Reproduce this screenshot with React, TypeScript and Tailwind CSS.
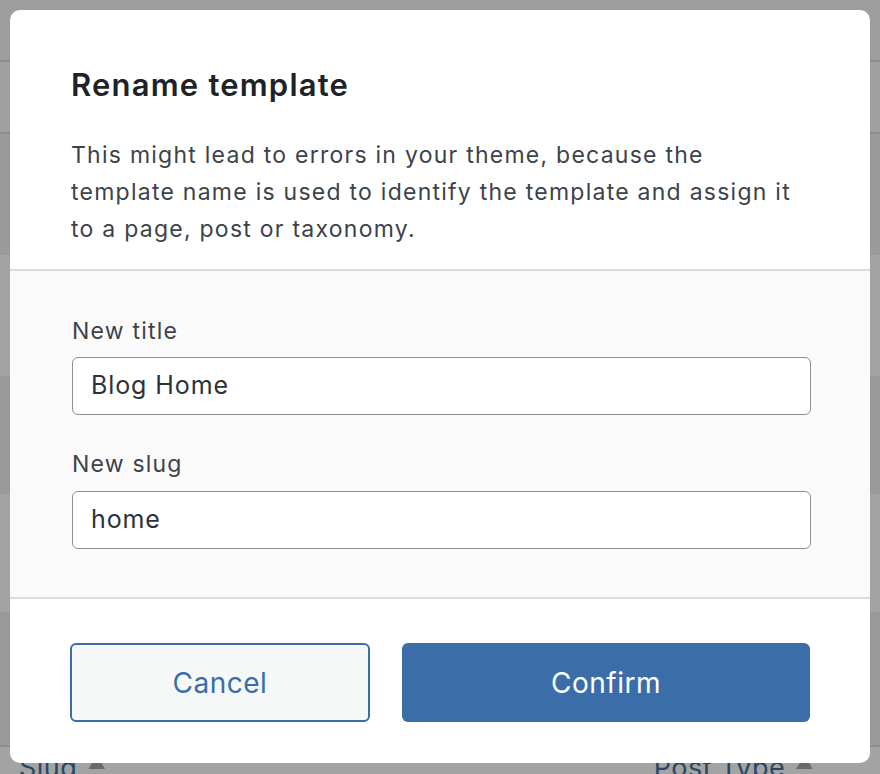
import React from "react";

export default function App() {
  const bands = [
    { h: 72, c: "bg-[#a0a0a0]" },
    { h: 121, c: "bg-[#9a9a9a]" },
    { h: 121, c: "bg-[#a3a3a3]" },
    { h: 118, c: "bg-[#9a9a9a]" },
    { h: 118, c: "bg-[#a3a3a3]" },
    { h: 133, c: "bg-[#9a9a9a]" },
  ];
  return (
    <div
      className="relative w-[880px] h-[774px] overflow-hidden bg-[#a2a2a2]"
      style={{ fontFamily: "Inter, 'Noto Sans', sans-serif" }}
    >
      {/* background page (dimmed) */}
      <div className="flex flex-col">
        <div className="h-[62px] bg-[#9e9e9e] border-b-2 border-[#8c8c8c]" />
        {bands.map((b, i) => (
          <div key={i} style={{ height: b.h }} className={`${b.c} ${i === 0 ? "border-b-2 border-[#8c8c8c]" : ""}`} />
        ))}
        <div className="border-t-2 border-[#8c8c8c] bg-[#a3a3a3] h-[40px] flex items-start justify-between pl-[19px] pr-[66px] pt-[6px]">
          <div className="flex items-start gap-[10px] text-[27px] leading-[30px] tracking-[0.5px] text-[#2a4665]">
            <span>Slug</span>
            <span className="text-[#6a6a6a] text-[18px] leading-[20px]">▲</span>
          </div>
          <div className="flex items-start gap-[10px] text-[27px] leading-[30px] tracking-[0.5px] text-[#2a4665]">
            <span>Post Type</span>
            <span className="text-[#6a6a6a] text-[18px] leading-[20px]">▲</span>
          </div>
        </div>
      </div>

      {/* modal */}
      <div className="absolute left-[10px] top-[10px] w-[860px] h-[753px] rounded-[10px] bg-white overflow-hidden flex flex-col">
        <div className="px-[61px] pt-[55px] pb-[21px] border-b-2 border-[#dcdcde]">
          <h1 className="text-[31px] leading-[40px] font-semibold text-[#1d2327] tracking-[1.2px]">
            Rename template
          </h1>
          <p className="mt-[32px] text-[23px] leading-[37px] text-[#3c434a] tracking-[1.25px] whitespace-nowrap">
            <span className="block">This might lead to errors in your theme, because the</span>
            <span className="block">template name is used to identify the template and assign it</span>
            <span className="block">to a page, post or taxonomy.</span>
          </p>
        </div>
        <div className="bg-[#fafafa] pl-[62px] pr-[59px] pt-[45px] pb-[48px] border-b-2 border-[#dcdcde] flex flex-col">
          <label className="text-[23px] leading-[30px] text-[#3c434a] tracking-[1.2px]">New title</label>
          <div className="mt-[11px] h-[58px] rounded-[6px] border-[1.5px] border-[#8c8f94] bg-white flex items-center px-[18px] text-[25px] tracking-[0.9px] text-[#2c3338]">
            Blog Home
          </div>
          <label className="mt-[34px] text-[23px] leading-[30px] text-[#3c434a] tracking-[1.2px]">New slug</label>
          <div className="mt-[12px] h-[58px] rounded-[6px] border-[1.5px] border-[#8c8f94] bg-white flex items-center px-[18px] text-[25px] tracking-[0.9px] text-[#2c3338]">
            home
          </div>
        </div>
        <div className="flex gap-[32px] px-[60px] pt-[44px]">
          <button className="w-[300px] h-[79px] rounded-[6px] border-2 border-[#3a6ea8] bg-[#f6f7f7] text-[#3a6ea8] text-[28px] tracking-[0.5px]">
            Cancel
          </button>
          <button className="flex-1 h-[79px] rounded-[6px] bg-[#3b6ea9] text-white text-[28px] tracking-[0.5px]">
            Confirm
          </button>
        </div>
      </div>
    </div>
  );
}
